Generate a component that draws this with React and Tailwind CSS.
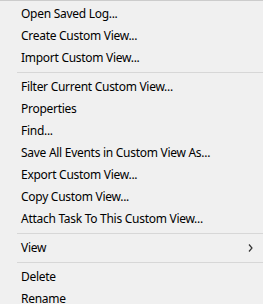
import React from 'react';

const groups = [
  ['Open Saved Log...', 'Create Custom View...', 'Import Custom View...'],
  [
    'Filter Current Custom View...',
    'Properties',
    'Find...',
    'Save All Events in Custom View As...',
    'Export Custom View...',
    'Copy Custom View...',
    'Attach Task To This Custom View...',
  ],
  [{ label: 'View', sub: true }],
  ['Delete', 'Rename'],
];

const Chevron = () => (
  <svg width="5" height="8" viewBox="0 0 5 8" className="text-[#333]">
    <path d="M1 0.5 L4 4 L1 7.5" fill="none" stroke="currentColor" strokeWidth="1.2" />
  </svg>
);

const Item = ({ label, sub }) => (
  <div className="h-[22px] flex items-center pl-[21px] pr-[10px] text-[12px] tracking-[-0.28px] text-black leading-none">
    <span className="flex-1 whitespace-nowrap">{label}</span>
    {sub && <Chevron />}
  </div>
);

export default function App() {
  return (
    <div
      className="w-[263px] h-[304px] overflow-hidden bg-[#f0f0f0] border-t border-[#cccccc] pt-[2px]"
      style={{ fontFamily: '"Noto Sans", "Open Sans", sans-serif' }}
    >
      {groups.map((items, gi) => (
        <div key={gi}>
          {gi > 0 && (
            <div className="py-[3px] pl-[17px]">
              <div className="h-px bg-[#d7d7d7]" />
            </div>
          )}
          {items.map((it) =>
            typeof it === 'string' ? (
              <Item key={it} label={it} />
            ) : (
              <Item key={it.label} label={it.label} sub={it.sub} />
            )
          )}
        </div>
      ))}
    </div>
  );
}
